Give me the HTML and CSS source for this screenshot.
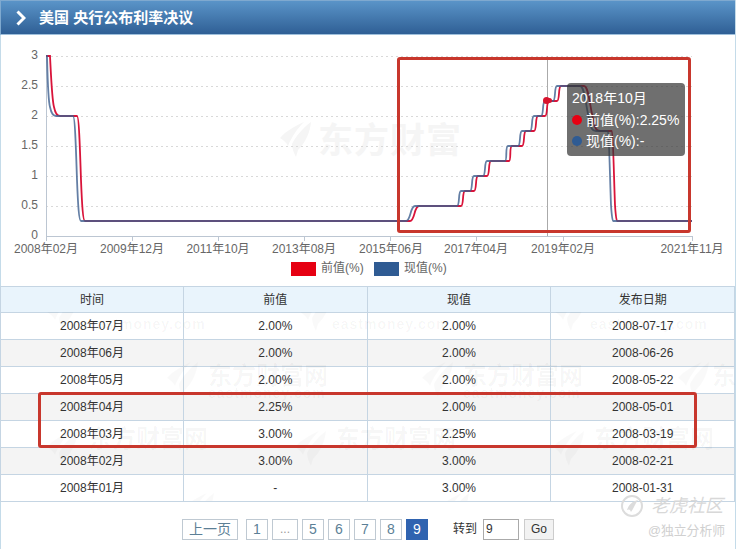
FILE: index.html
```html
<!DOCTYPE html>
<html lang="zh">
<head>
<meta charset="utf-8">
<title>美国 央行公布利率决议</title>
<link rel="stylesheet" href="styles.css">
</head>
<body>
<div class="page">
  <header class="title-bar">
    <svg class="chevron" width="10" height="16" viewBox="0 0 10 16"><path d="M1.5 1.5 L8 8 L1.5 14.5" fill="none" stroke="#fff" stroke-width="3"/></svg>
    <h1 class="title">美国 央行公布利率决议</h1>
  </header>

  <section class="chart">
    <svg class="chart-svg" width="736" height="251" viewBox="0 35 736 251">
      <defs>
        <g id="leaf">
          <path d="M0 16 C6 9 15 4 24 0 C18 6 12 14 8 24 C6 20 3 18 0 16 Z"/>
          <path d="M12 22 C16 14 23 6 31 0 C30 10 26 20 18 28 L16 35 C14 31 12 27 12 22 Z"/>
        </g>
      </defs>
      <g class="wm-chart">
        <use href="#leaf" x="280" y="122"/>
        <text x="318" y="153" class="wm-chart-text">东方财富</text>
      </g>
      <g class="grid">
        <line x1="46" x2="692" y1="56.5" y2="56.5"/>
        <line x1="46" x2="692" y1="86.5" y2="86.5"/>
        <line x1="46" x2="692" y1="116.5" y2="116.5"/>
        <line x1="46" x2="692" y1="146.5" y2="146.5"/>
        <line x1="46" x2="692" y1="176.5" y2="176.5"/>
        <line x1="46" x2="692" y1="206.5" y2="206.5"/>
      </g>
      <g class="axis">
        <path d="M46.5 56 V241 M46 236.5 H693 M132.5 236 V241 M218.5 236 V241 M304.5 236 V241 M390.5 236 V241 M476.5 236 V241 M563.5 236 V241 M692.5 236 V241"/>
      </g>
      <g class="y-labels">
        <text x="38" y="59">3</text>
        <text x="38" y="89">2.5</text>
        <text x="38" y="119">2</text>
        <text x="38" y="149">1.5</text>
        <text x="38" y="179">1</text>
        <text x="38" y="209">0.5</text>
        <text x="38" y="239">0</text>
      </g>
      <g class="x-labels">
        <text x="46" y="253">2008年02月</text>
        <text x="132" y="253">2009年12月</text>
        <text x="218" y="253">2011年10月</text>
        <text x="304" y="253">2013年08月</text>
        <text x="391" y="253">2015年06月</text>
        <text x="476" y="253">2017年04月</text>
        <text x="563" y="253">2019年02月</text>
        <text x="692" y="253">2021年11月</text>
      </g>
      <line class="crosshair" x1="547.5" x2="547.5" y1="56" y2="236"/>
      <path class="line-prev" d="M46 56 L50 56 C51 75 52 100 54 107 C55 112 57 116 60 116 L77 116 C79 116 80 150 81 180 C82 205 83 221 85 221 L410 221 C415 221 414 206 419 206 L461 206 C464 206 462 191 465 191 L474 191 C477 191 475 176 478 176 L487 176 C490 176 488 161 491 161 L509 161 C511.5 161 509 146 512 146 L522 146 C525 146 523 131 526 131 L534 131 C537 131 535 116 538 116 L545 116 C548 116 546 101 549 101 L557 101 C560 101 558 86 561 86 L584 86 C589 86 590 110 594 122 C595 128 596 131 600 131 L612 131 C613 131 614 180 615 205 C616 221 617 221 617 221 L692 221"/>
      <path class="line-cur" d="M46 56 L47 56 C47.5 75 48 100 50 107 C51 112 53 116 56 116 L73 116 C75 116 76 150 77 180 C78 205 79 221 81 221 L406 221 C411 221 410 206 415 206 L457 206 C460 206 458 191 461 191 L470 191 C473 191 471 176 474 176 L483 176 C486 176 484 161 487 161 L505 161 C507.5 161 505 146 508 146 L518 146 C521 146 519 131 522 131 L530 131 C533 131 531 116 534 116 L541 116 C544 116 542 101 545 101 L553 101 C556 101 554 86 557 86 L580 86 C585 86 586 110 590 122 C591 128 592 131 596 131 L608 131 C609 131 610 180 611 205 C612 221 613 221 613 221 L692 221"/>
      <circle class="marker" cx="546.5" cy="100.5" r="3.5"/>
      <circle class="marker" cx="549.5" cy="100.5" r="2.5"/>
      <g class="legend">
        <rect x="291" y="262" width="25" height="14" class="legend-prev"/>
        <text x="321" y="272">前值(%)</text>
        <rect x="374" y="262" width="25" height="14" class="legend-cur"/>
        <text x="404" y="272">现值(%)</text>
      </g>
    </svg>
    <div class="tooltip">
      <div class="tip-row">2018年10月</div>
      <div class="tip-row"><span class="dot dot-prev"></span>前值(%):2.25%</div>
      <div class="tip-row"><span class="dot dot-cur"></span>现值(%):-</div>
    </div>
  </section>

  <section class="table-wrap">
    <table class="data">
      <thead>
        <tr><th class="col-first">时间</th><th>前值</th><th>现值</th><th>发布日期</th></tr>
      </thead>
      <tbody>
        <tr><td>2008年07月</td><td>2.00%</td><td>2.00%</td><td>2008-07-17</td></tr>
        <tr><td>2008年06月</td><td>2.00%</td><td>2.00%</td><td>2008-06-26</td></tr>
        <tr><td>2008年05月</td><td>2.00%</td><td>2.00%</td><td>2008-05-22</td></tr>
        <tr><td>2008年04月</td><td>2.25%</td><td>2.00%</td><td>2008-05-01</td></tr>
        <tr><td>2008年03月</td><td>3.00%</td><td>2.25%</td><td>2008-03-19</td></tr>
        <tr><td>2008年02月</td><td>3.00%</td><td>3.00%</td><td>2008-02-21</td></tr>
        <tr><td>2008年01月</td><td>-</td><td>3.00%</td><td>2008-01-31</td></tr>
      </tbody>
    </table>
    <svg class="wm-table" width="736" height="189" viewBox="0 312 736 189">
      <g class="wm-shape">
        <use href="#leaf" x="47" y="296"/><use href="#leaf" x="300" y="296"/><use href="#leaf" x="555" y="296"/>
        <use href="#leaf" x="167" y="362"/><use href="#leaf" x="422" y="362"/><use href="#leaf" x="678" y="362"/>
        <use href="#leaf" x="47" y="431"/><use href="#leaf" x="295" y="431"/><use href="#leaf" x="553" y="431"/>
        <use href="#leaf" x="183" y="493"/><use href="#leaf" x="438" y="493"/>
      </g>
      <g class="wm-cn">
        <text x="208" y="384">东方财富网</text><text x="463" y="384">东方财富网</text><text x="712" y="384">东</text>
        <text x="88" y="447">东方财富网</text><text x="336" y="447">东方财富网</text><text x="594" y="447">东方财富网</text>
      </g>
      <g class="wm-en">
        <text x="88" y="329">eastmoney.com</text><text x="332" y="329">eastmoney.com</text><text x="590" y="329">eastmoney.com</text>
        <text x="208" y="398">eastmoney.com</text><text x="463" y="398">eastmoney.com</text>
      </g>
    </svg>
  </section>

  <nav class="pager">
    <a class="pg pg-prev">上一页</a>
    <a class="pg pg-num">1</a>
    <a class="pg pg-dots">...</a>
    <a class="pg pg-num">5</a>
    <a class="pg pg-num">6</a>
    <a class="pg pg-num">7</a>
    <a class="pg pg-num">8</a>
    <a class="pg pg-num pg-active">9</a>
    <span class="goto-label">转到</span>
    <input class="goto-input" type="text" value="9">
    <button class="goto-btn" type="button">Go</button>
  </nav>
</div>

<div class="mark mark-chart"></div>
<div class="mark mark-table"></div>

<div class="source">
  <div class="source-top">
    <svg width="24" height="24" viewBox="0 0 24 24"><circle cx="12" cy="12" r="10" fill="none" stroke="#dcdcdc" stroke-width="2"/><path d="M7 16 C9 10 13 7 18 6 C15 10 14 14 11 18 C10 15 9 15 7 16 Z" fill="#dcdcdc"/></svg>
    <span class="source-name">老虎社区</span>
  </div>
  <div class="source-sub">@独立分析师</div>
</div>
</body>
</html>
```

FILE: styles.css
```css
* { box-sizing: border-box; }
html, body { margin: 0; padding: 0; background: #fff; }
body {
  position: relative;
  width: 738px;
  height: 549px;
  overflow: hidden;
  font-family: "Liberation Sans", "Noto Sans CJK SC", sans-serif;
  color: #333;
}
.page {
  width: 736px;
  height: 549px;
  border-left: 1px solid #c4dbe9;
  border-right: 1px solid #c4dbe9;
}
.title-bar {
  display: flex;
  align-items: center;
  height: 35px;
  padding-left: 15px;
  margin-left: -1px;
  border-top: 1px solid #7fa9cf;
  border-bottom: 1px solid #9fc0dc;
  border-left: 1px solid #7fa9cf;
  background: linear-gradient(#5a94c8, #2f5f95);
}
.chevron { flex: none; }
.title {
  margin: 0 0 0 13px;
  font-size: 15px;
  line-height: 20px;
  font-weight: bold;
  color: #fff;
}
.chart { position: relative; height: 251px; }
.chart-svg { display: block; margin-left: -1px; }
.wm-chart { fill: #f5f5f5; }
.wm-chart-text { font-size: 35px; font-weight: bold; letter-spacing: 1px; }
.grid line { stroke: #d9d9d9; stroke-width: 1; stroke-dasharray: 2 3; }
.axis path { fill: none; stroke: #bcc6d2; stroke-width: 1; }
.y-labels text, .x-labels text, .legend text { font-size: 12px; fill: #666; }
.y-labels text { text-anchor: end; }
.x-labels text { text-anchor: middle; }
.crosshair { stroke: #aaa; stroke-width: 1; }
.line-prev, .line-cur { fill: none; stroke-width: 1.8; }
.line-prev { stroke: #d9143a; }
.line-cur { stroke: #3d5f8f; stroke-opacity: 0.8; }
.marker { fill: #d8142e; }
.legend-prev { fill: #e60012; }
.legend-cur { fill: #2f5b93; }
.tooltip {
  position: absolute;
  left: 566px;
  top: 48px;
  width: 118px;
  height: 73px;
  padding: 5px 5px;
  border-radius: 4px;
  background: rgba(50, 50, 50, 0.7);
  color: #fff;
  font-size: 14px;
  line-height: 21px;
  white-space: nowrap;
}
.tip-row { display: flex; align-items: center; height: 21.4px; }
.dot {
  flex: none;
  width: 10px;
  height: 10px;
  margin-right: 4px;
  border-radius: 50%;
}
.dot-prev { background: #e60012; }
.dot-cur { background: #2f5b93; }
.table-wrap { position: relative; }
.data {
  width: 735px;
  margin-left: -1px;
  border-collapse: collapse;
  table-layout: fixed;
  font-size: 12px;
  line-height: 14px;
}
.data th, .data td {
  height: 27px;
  padding: 0;
  border: 1px solid #c5d5e3;
  text-align: center;
  font-weight: normal;
  color: #333;
}
.data th { height: 26px; background: #e9f4fc; }
.data .col-first { width: 183px; }
.data tbody tr:nth-child(even) td { background: #f4f4f4; }
.wm-table {
  position: absolute;
  left: -1px;
  top: 26px;
  pointer-events: none;
}
.wm-shape { fill: rgba(0, 0, 0, 0.025); }
.wm-cn text { font-size: 24px; font-weight: bold; fill: rgba(0, 0, 0, 0.04); }
.wm-en text { font-size: 14px; font-weight: bold; fill: rgba(0, 0, 0, 0.04); letter-spacing: 1px; }
.pager {
  display: flex;
  align-items: center;
  height: 48px;
  padding: 6px 0 0 181px;
  font-size: 14px;
  line-height: 16px;
}
.pg {
  display: flex;
  align-items: center;
  justify-content: center;
  flex: none;
  height: 21px;
  margin-right: 4px;
  border: 1px solid #bfc9d2;
  color: #5c7f96;
}
.pg-prev { width: 56px; margin-right: 8px; }
.pg-num { width: 22px; }
.pg-dots { width: 26px; color: #999; font-size: 12px; }
.pg-active { background: #2f63b0; border-color: #2f63b0; color: #fff; }
.goto-label { margin-left: 21px; font-size: 12px; color: #333; }
.goto-input {
  width: 36px;
  height: 21px;
  margin-left: 6px;
  padding: 0 2px;
  border: 1px solid #aaa;
  font: 12px "Liberation Sans", sans-serif;
  color: #333;
}
.goto-btn {
  width: 30px;
  height: 21px;
  margin-left: 5px;
  padding: 0;
  border: 1px solid #ccc;
  background: #f2f2f2;
  font: 12px "Liberation Sans", sans-serif;
  color: #333;
}
.mark {
  position: absolute;
  border: 3px solid #c8372d;
  border-radius: 3px;
  pointer-events: none;
}
.mark-chart { left: 397px; top: 57px; width: 294px; height: 176px; }
.mark-table { left: 38px; top: 392px; width: 659px; height: 56px; }
.source {
  position: absolute;
  left: 620px;
  top: 494px;
  width: 108px;
  color: #d0d0d0;
  pointer-events: none;
}
.source-top { display: flex; align-items: center; gap: 7px; }
.source-name { font-size: 18px; line-height: 22px; font-style: italic; color: #d8d8d8; }
.source-sub { margin-top: 5px; padding-left: 28px; font-size: 12.8px; line-height: 16px; white-space: nowrap; }
```
